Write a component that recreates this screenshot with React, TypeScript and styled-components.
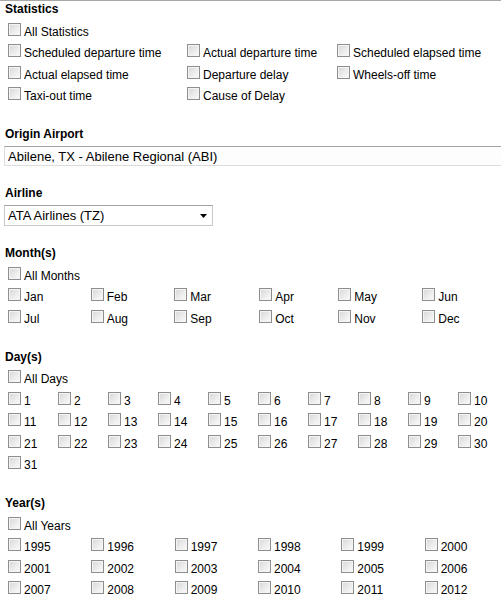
import React from "react";
import styled, { createGlobalStyle } from "styled-components";

const Global = createGlobalStyle`
  html, body { margin: 0; padding: 0; background: #fff; overflow: hidden; }
  #root { width: 501px; }
`;

const Page = styled.div`
  border-top: 1px solid #a8a8a8;
  padding-left: 4px;
  font-family: "Liberation Sans", Arial, sans-serif;
  font-size: 12px;
  color: #000;
`;

const Section = styled.section`
  margin-bottom: 19px;
`;

const Heading = styled.div`
  height: 17px;
  line-height: 17px;
  font-weight: bold;
  padding-left: 1px;
  margin-bottom: 3px;
`;

const Grid = styled.div<{ $cols: string }>`
  display: grid;
  grid-template-columns: ${(p) => p.$cols};
  padding-left: 4px;
`;

const Item = styled.label<{ $full?: boolean }>`
  display: flex;
  align-items: center;
  height: 21.5px;
  white-space: nowrap;
  grid-column: ${(p) => (p.$full ? "1 / -1" : "auto")};
`;

const Box = styled.input.attrs({ type: "checkbox" })`
  appearance: none;
  -webkit-appearance: none;
  width: 13px;
  height: 13px;
  margin: 0 3px 5px 0;
  flex: none;
  border: 1px solid #8e8e8e;
  background: linear-gradient(135deg, #d6d6d6 0%, #ececec 55%, #fbfbfb 100%);
  box-shadow: inset 0 0 0 1px #f4f4f4;
`;

const Text = styled.span`
  line-height: 14px;
`;

const TextInput = styled.input`
  box-sizing: border-box;
  width: calc(100% + 20px);
  height: 20px;
  margin: 0;
  padding: 0 3px;
  border: 1px solid #dcdcdc;
  border-top-color: #a3a3a3;
  background: #fdfdfd;
  font-family: "Liberation Sans", Arial, sans-serif;
  font-size: 13px;
  color: #000;
  outline: none;
`;

const SelectWrap = styled.div`
  position: relative;
  width: 209px;
  height: 21px;
`;

const Select = styled.select`
  appearance: none;
  -webkit-appearance: none;
  box-sizing: border-box;
  width: 100%;
  height: 100%;
  margin: 0;
  padding: 0 0 0 3px;
  border: 1px solid #c8c8c8;
  border-top-color: #a3a3a3;
  border-radius: 0;
  background: #fff;
  font-family: "Liberation Sans", Arial, sans-serif;
  font-size: 13px;
  color: #000;
  outline: none;
`;

const Arrow = styled.svg`
  position: absolute;
  right: 6px;
  top: 9px;
  pointer-events: none;
`;

type CheckProps = { label: string; full?: boolean };
const Check = ({ label, full }: CheckProps) => (
  <Item $full={full}>
    <Box />
    <Text>{label}</Text>
  </Item>
);

const stats = [
  "Scheduled departure time",
  "Actual departure time",
  "Scheduled elapsed time",
  "Actual elapsed time",
  "Departure delay",
  "Wheels-off time",
  "Taxi-out time",
  "Cause of Delay",
];

const months = ["Jan", "Feb", "Mar", "Apr", "May", "Jun", "Jul", "Aug", "Sep", "Oct", "Nov", "Dec"];
const days = Array.from({ length: 31 }, (_, i) => String(i + 1));
const years = Array.from({ length: 18 }, (_, i) => String(1995 + i));

export default function App() {
  return (
    <>
      <Global />
      <Page>
        <Section>
          <Heading>Statistics</Heading>
          <Grid $cols="179px 150px 1fr">
            <Check label="All Statistics" full />
            {stats.map((s) => (
              <Check key={s} label={s} />
            ))}
          </Grid>
        </Section>

        <Section>
          <Heading>Origin Airport</Heading>
          <TextInput defaultValue="Abilene, TX - Abilene Regional (ABI)" />
        </Section>

        <Section>
          <Heading>Airline</Heading>
          <SelectWrap>
            <Select defaultValue="TZ">
              <option value="TZ">ATA Airlines (TZ)</option>
            </Select>
            <Arrow width="7" height="4" viewBox="0 0 7 4">
              <path d="M0 0H7L3.5 4Z" fill="#000" />
            </Arrow>
          </SelectWrap>
        </Section>

        <Section>
          <Heading>Month(s)</Heading>
          <Grid $cols="82.7px 83.6px 85px 79px 84px 1fr">
            <Check label="All Months" full />
            {months.map((m) => (
              <Check key={m} label={m} />
            ))}
          </Grid>
        </Section>

        <Section>
          <Heading>Day(s)</Heading>
          <Grid $cols="repeat(10, 50px)">
            <Check label="All Days" full />
            {days.map((d) => (
              <Check key={d} label={d} />
            ))}
          </Grid>
        </Section>

        <Section>
          <Heading>Year(s)</Heading>
          <Grid $cols="repeat(6, 83.33px)">
            <Check label="All Years" full />
            {years.map((y) => (
              <Check key={y} label={y} />
            ))}
          </Grid>
        </Section>
      </Page>
    </>
  );
}
